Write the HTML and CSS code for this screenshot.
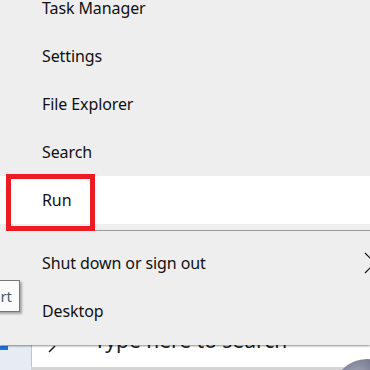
FILE: index.html
```html
<!DOCTYPE html>
<html lang="en">
<head>
  <meta charset="UTF-8">
  <title>Power menu</title>
  <link rel="stylesheet" href="styles.css">
</head>
<body>
  <div class="screen">
    <div class="menu">
      <div class="item first">Task Manager</div>
      <div class="item">Settings</div>
      <div class="item">File Explorer</div>
      <div class="item">Search</div>
      <div class="item active">
        Run
        <div class="highlight"></div>
      </div>
      <div class="separator"></div>
      <div class="item has-sub">
        <span>Shut down or sign out</span>
        <svg class="chevron" width="12" height="22" viewBox="0 0 12 22">
          <polyline points="1,1 11,11 1,21" fill="none" stroke="#111" stroke-width="1.2"/>
        </svg>
      </div>
      <div class="item">Desktop</div>
    </div>

    <div class="taskbar">
      <div class="start-btn"><div class="start-bar"></div></div>
      <div class="search">
        <svg class="search-icon" width="10" height="10" viewBox="0 0 10 10">
          <line x1="1" y1="9" x2="7" y2="3" stroke="#222" stroke-width="1.6"/>
        </svg>
        <span class="search-text">Type here to search</span>
      </div>
      <div class="avatar"></div>
    </div>

    <div class="tooltip">Start</div>
  </div>
</body>
</html>
```

FILE: styles.css
```css
body {
  margin: 0;
  background-color: #eeeeee;
  font-family: "Noto Sans", "Open Sans", sans-serif;
  color: #111;
  overflow: hidden;
}
.screen {
  position: relative;
  width: 370px;
  height: 370px;
  overflow: hidden;
}
.menu {
  background-color: #eeeeee;
  padding-bottom: 10px;
  box-shadow: 0 1px 2px rgba(0, 0, 0, 0.45);
  position: relative;
  z-index: 2;
}
.item {
  height: 48px;
  display: flex;
  align-items: center;
  padding-left: 42px;
  font-size: 16px;
  letter-spacing: -0.1px;
  position: relative;
}
.item.first {
  margin-top: -16px;
}
.item.active {
  background-color: #ffffff;
}
.has-sub {
  justify-content: space-between;
}
.chevron {
  margin-right: -6px;
}
.separator {
  height: 15px;
  box-sizing: border-box;
  border-top: 6px solid #eeeeee;
  border-bottom: 8px solid #eeeeee;
  background-color: #9a9a9a;
  margin-left: 8px;
}
/* красная рамка поверх пункта Run */
.highlight {
  position: absolute;
  left: 6px;
  top: -2px;
  width: 89px;
  height: 57px;
  box-sizing: border-box;
  border: 5px solid #ed1c24;
}
.taskbar {
  display: flex;
  height: 25px;
  background-color: #d4d4d4;
  position: relative;
}
.start-btn {
  width: 31px;
  background-color: #e6ebf4;
}
.start-bar {
  width: 8px;
  height: 4px;
  margin-top: 1px;
  background-color: #1a73d9;
}
.search {
  flex: 1;
  display: flex;
  align-items: flex-start;
  background-color: #ffffff;
  border-left: 1px solid #c4c4c4;
  margin-bottom: 3px;
  overflow: hidden;
}
.search-icon {
  margin-left: 16px;
  margin-top: -2px;
}
.search-text {
  margin-left: 36px;
  margin-top: -19px;
  font-size: 21px;
  color: #222;
}
.avatar {
  position: absolute;
  left: 333px;
  top: 14px;
  width: 68px;
  height: 68px;
  border-radius: 50%;
  background: radial-gradient(circle at 35% 25%, #a4a6b8, #55586f 55%);
}
.tooltip {
  position: absolute;
  right: 350px;
  top: 280px;
  height: 30px;
  line-height: 30px;
  padding: 0 7px;
  font-size: 15px;
  color: #4b5a6e;
  background-color: #fbfbfb;
  border: 1px solid #777;
  box-shadow: 2px 2px 2px rgba(0, 0, 0, 0.3);
  z-index: 3;
}
```
